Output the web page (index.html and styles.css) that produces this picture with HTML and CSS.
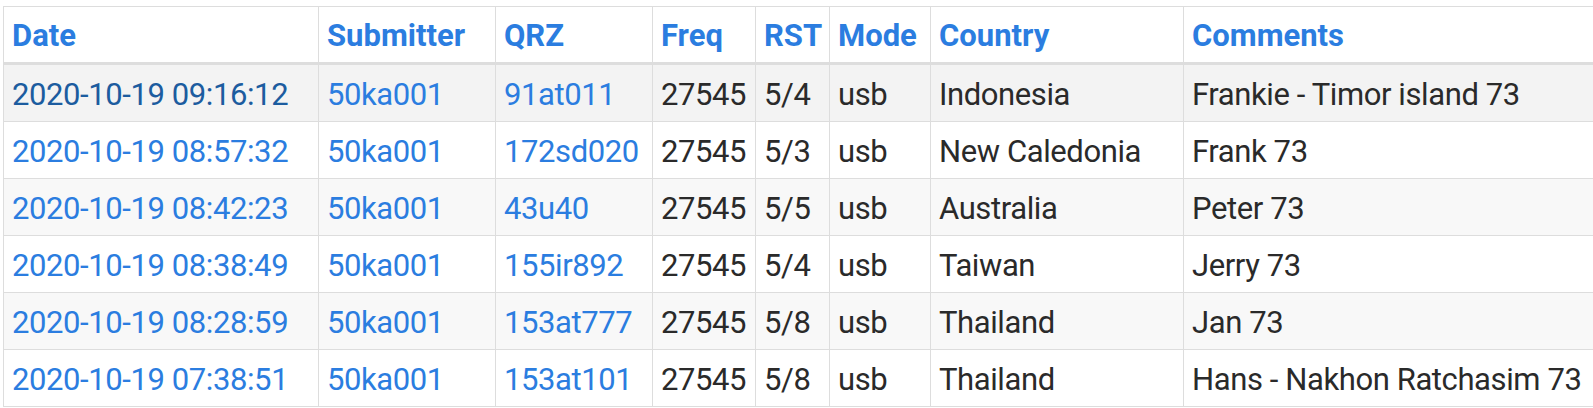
FILE: index.html
```html
<!DOCTYPE html>
<html>
<head>
<meta charset="utf-8">
<link rel="stylesheet" href="styles.css">
</head>
<body>
<table class="log">
  <colgroup>
    <col class="c-date"><col class="c-sub"><col class="c-qrz"><col class="c-freq"><col class="c-rst"><col class="c-mode"><col class="c-country"><col class="c-comments">
  </colgroup>
  <thead>
    <tr>
      <th><a href="#">Date</a></th>
      <th><a href="#">Submitter</a></th>
      <th><a href="#">QRZ</a></th>
      <th><a href="#">Freq</a></th>
      <th><a href="#">RST</a></th>
      <th><a href="#">Mode</a></th>
      <th><a href="#">Country</a></th>
      <th><a href="#">Comments</a></th>
    </tr>
  </thead>
  <tbody>
    <tr class="hover">
      <td><a class="visited" href="#">2020-10-19 09:16:12</a></td>
      <td><a href="#">50ka001</a></td>
      <td><a href="#">91at011</a></td>
      <td>27545</td><td>5/4</td><td>usb</td><td>Indonesia</td><td>Frankie - Timor island 73</td>
    </tr>
    <tr>
      <td><a href="#">2020-10-19 08:57:32</a></td>
      <td><a href="#">50ka001</a></td>
      <td><a href="#">172sd020</a></td>
      <td>27545</td><td>5/3</td><td>usb</td><td>New Caledonia</td><td>Frank 73</td>
    </tr>
    <tr>
      <td><a href="#">2020-10-19 08:42:23</a></td>
      <td><a href="#">50ka001</a></td>
      <td><a href="#">43u40</a></td>
      <td>27545</td><td>5/5</td><td>usb</td><td>Australia</td><td>Peter 73</td>
    </tr>
    <tr>
      <td><a href="#">2020-10-19 08:38:49</a></td>
      <td><a href="#">50ka001</a></td>
      <td><a href="#">155ir892</a></td>
      <td>27545</td><td>5/4</td><td>usb</td><td>Taiwan</td><td>Jerry 73</td>
    </tr>
    <tr>
      <td><a href="#">2020-10-19 08:28:59</a></td>
      <td><a href="#">50ka001</a></td>
      <td><a href="#">153at777</a></td>
      <td>27545</td><td>5/8</td><td>usb</td><td>Thailand</td><td>Jan 73</td>
    </tr>
    <tr>
      <td><a href="#">2020-10-19 07:38:51</a></td>
      <td><a href="#">50ka001</a></td>
      <td><a href="#">153at101</a></td>
      <td>27545</td><td>5/8</td><td>usb</td><td>Thailand</td><td>Hans - Nakhon Ratchasim 73</td>
    </tr>
  </tbody>
</table>
</body>
</html>
```

FILE: styles.css
```css
html, body {
  margin: 0;
  padding: 0;
  overflow: hidden;
  background: #fff;
}
body {
  font-family: Roboto, "Open Sans", sans-serif;
  color: #2a2a2a;
}
.log {
  border-collapse: collapse;
  table-layout: fixed;
  width: 1600px;
  margin: 6px 0 0 3px;
  font-size: 31px;
  letter-spacing: -0.4px;
}
.c-date { width: 315px; }
.c-sub { width: 177px; }
.c-qrz { width: 157px; }
.c-freq { width: 103px; }
.c-rst { width: 74px; }
.c-mode { width: 101px; }
.c-country { width: 253px; }
.c-comments { width: 420px; }

.log th, .log td {
  border: 1px solid #dddddd;
  padding: 0 8px;
  text-align: left;
  vertical-align: middle;
  white-space: nowrap;
  overflow: hidden;
}
.log th {
  height: 53px;
  font-weight: 700;
  letter-spacing: 0;
  border-bottom: 3px solid #dddddd;
  padding-top: 2px;
}
.log td {
  height: 54px;
  font-weight: 400;
  padding-top: 2px;
}
.log a {
  color: #2b7de0;
  text-decoration: none;
}
.log a.visited {
  color: #1c5c9f;
}
.log tbody tr:nth-child(odd) {
  background: #f8f8f8;
}
.log tbody tr.hover {
  background: #f3f3f3;
}
```
